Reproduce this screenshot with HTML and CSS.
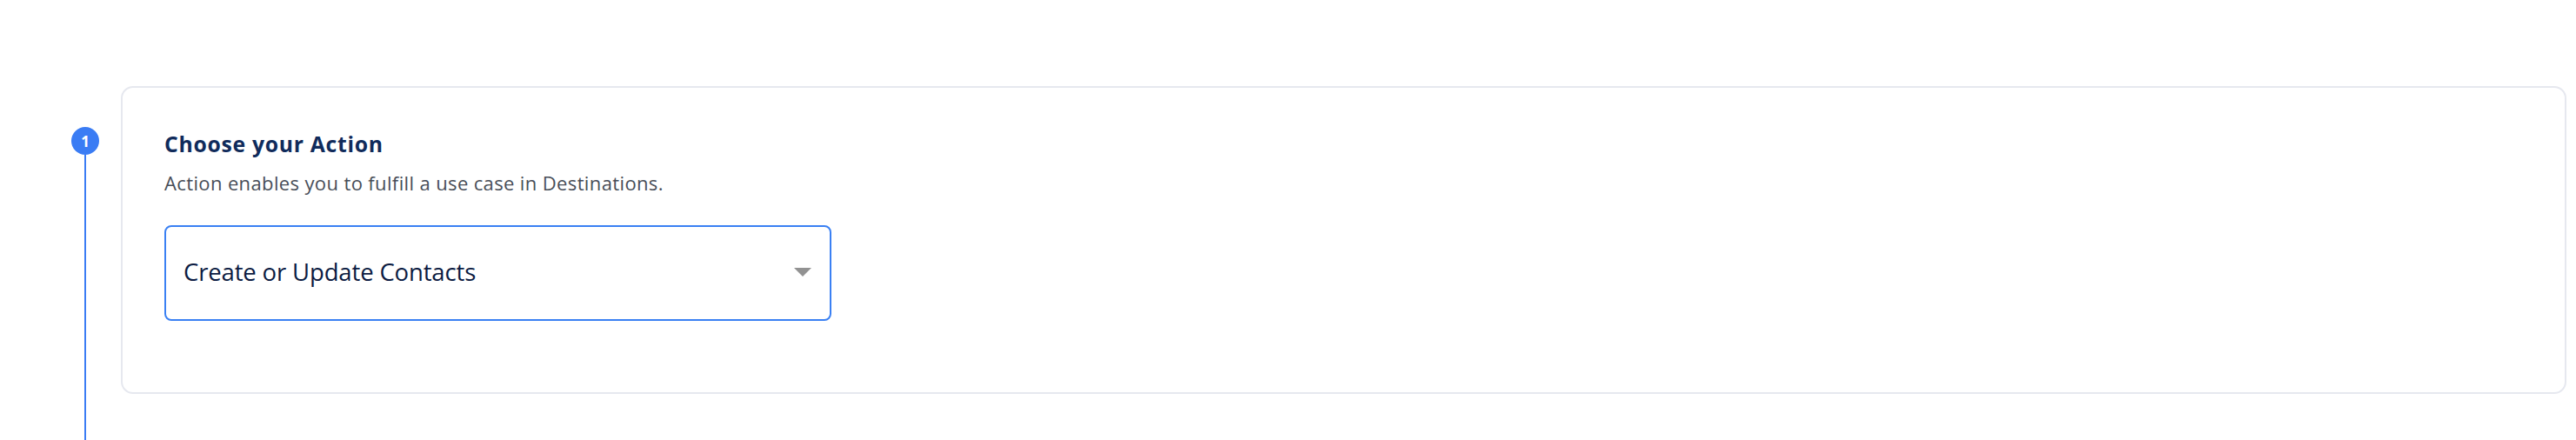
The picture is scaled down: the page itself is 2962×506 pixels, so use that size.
FILE: index.html
```html
<!DOCTYPE html>
<html lang="en">
<head>
<meta charset="utf-8">
<title>Choose your Action</title>
<link rel="stylesheet" href="styles.css">
</head>
<body>
<div class="page">
  <div class="step">
    <div class="rail">
      <div class="badge">1</div>
      <div class="rail-line"></div>
    </div>
    <section class="card">
      <h2 class="card-title">Choose your Action</h2>
      <p class="card-desc">Action enables you to fulfill a use case in Destinations.</p>
      <div class="select">
        <span class="select-value">Create or Update Contacts</span>
        <span class="select-caret"></span>
      </div>
    </section>
  </div>
</div>
</body>
</html>
```
FILE: styles.css
```css
html, body {
  margin: 0;
  padding: 0;
  background: #ffffff;
  height: 100%;
  overflow: hidden;
}
body {
  font-family: "Open Sans", Lato, "Noto Sans", sans-serif;
}
.page {
  height: 100%;
  padding: 99px 11px 0 82px;
  box-sizing: border-box;
}
.step {
  display: flex;
  align-items: stretch;
  height: 100%;
}
.rail {
  width: 32px;
  display: flex;
  flex-direction: column;
  align-items: center;
  padding-top: 47px;
  flex: none;
}
.badge {
  width: 32px;
  height: 32px;
  border-radius: 50%;
  background: #3a7cf4;
  color: #ffffff;
  font-weight: 700;
  font-size: 17px;
  line-height: 1;
  display: flex;
  align-items: center;
  justify-content: center;
  flex: none;
}
.rail-line {
  width: 2px;
  flex: 1;
  background: #3a7cf4;
  margin-left: -1px;
}
.card {
  flex: 1;
  margin-left: 25px;
  align-self: flex-start;
  border: 2px solid #e6e8ef;
  border-radius: 14px;
  padding: 48px 48px 0;
  box-sizing: border-box;
  height: 354px;
}
.card-title {
  margin: 0;
  font-size: 24.75px;
  line-height: 34px;
  font-weight: 700;
  letter-spacing: 0.7px;
  color: #102b5b;
}
.card-desc {
  margin: 12px 0 0;
  font-size: 22px;
  line-height: 30px;
  letter-spacing: 0.37px;
  color: #484e58;
}
.select {
  margin-top: 34px;
  width: 767px;
  height: 110px;
  box-sizing: border-box;
  border: 2px solid #3a80f3;
  border-radius: 8px;
  display: flex;
  align-items: center;
  padding: 0 21px 4px 20px;
}
.select-value {
  flex: 1;
  font-size: 27.5px;
  letter-spacing: -0.15px;
  color: #0b1b42;
}
.select-caret {
  width: 0;
  height: 0;
  margin-top: 2px;
  border-left: 10px solid transparent;
  border-right: 10px solid transparent;
  border-top: 10px solid #929292;
}
```
